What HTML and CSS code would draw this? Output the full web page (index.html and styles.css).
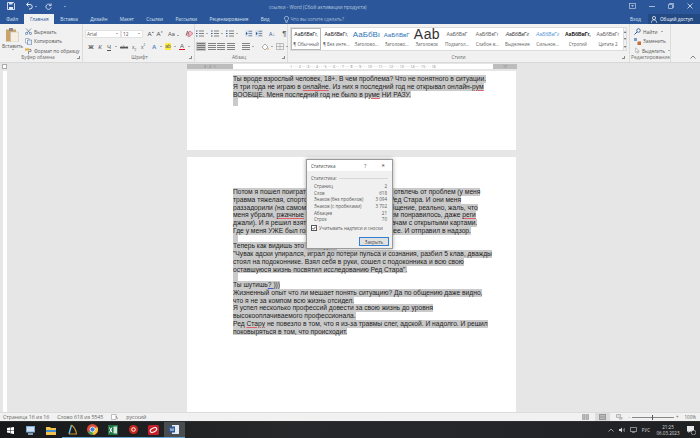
FILE: index.html
```html
<!DOCTYPE html>
<html lang="ru">
<head>
    <meta charset="UTF-8">
    <title>ссылки - Word</title>
    <link rel="stylesheet" href="styles.css">
</head>
<body>
    <svg class="defs" width="0" height="0">
        <symbol id="lines" viewBox="0 0 8 7"><path d="M0 .5h8M0 2.5h8M0 4.5h8M0 6.5h8" stroke="#666" stroke-width=".8"/></symbol>
        <symbol id="list" viewBox="0 0 8 7"><path d="M3 1h5M3 3.500h5M3 6h5" stroke="#666" stroke-width=".8"/><path d="M0 1h1.500M0 3.500h1.500M0 6h1.500" stroke="#2b579a" stroke-width="1.200"/></symbol>
        <symbol id="indent" viewBox="0 0 9 8"><rect width="9" height="8" fill="#dbe6f4"/><path d="M4 1.500h4M4 4h4M4 6.500h4" stroke="#666" stroke-width=".8"/><path d="M1 2l2 2-2 2z" fill="#2b579a"/></symbol>
    </svg>

    <header class="titlebar">
        <div class="qat">
            <svg class="q-save" width="8" height="8" viewBox="0 0 8 8"><path d="M.5.500h6l1 1v6h-7z" fill="none" stroke="#fff" stroke-width=".8"/><path d="M2 .500h3.500v2H2zM2 5h4v2.500H2z" fill="#dfe7f3"/></svg>
            <svg class="q-undo" width="8" height="8" viewBox="0 0 8 8"><path d="M2 2.500h3a2 2 0 0 1 0 4.500H4M3.500.500L1.500 2.500l2 2" fill="none" stroke="#dfe7f3" stroke-width="1"/></svg>
            <i class="caret-w"></i>
            <svg class="q-redo" width="7" height="7" viewBox="0 0 8 8"><path d="M6.500 2.500A3 3 0 1 0 7 5M7 .500v2.500H4.500" fill="none" stroke="#dfe7f3" stroke-width="1"/></svg>
            <i class="caret-w q-more"></i>
        </div>
        <div class="doc-title">ссылки - Word (Сбой активации продукта)</div>
        <div class="win-btns">
            <svg width="7" height="6" viewBox="0 0 7 6"><rect x=".5" y=".5" width="6" height="5" fill="none" stroke="#a9bcd8" stroke-width=".8"/><path d="M2 2h3L3.500 4z" fill="#a9bcd8"/></svg>
            <svg width="6" height="6" viewBox="0 0 6 6"><path d="M0 3.500h6" stroke="#c5d2e6" stroke-width=".8"/></svg>
            <svg width="6" height="6" viewBox="0 0 6 6"><path d="M.5 1.500h4v4h-4zM1.500 1.500v-1h4v4h-1" fill="none" stroke="#c5d2e6" stroke-width=".7"/></svg>
            <svg width="6" height="6" viewBox="0 0 6 6"><path d="M.5.500l5 5M5.500.500l-5 5" stroke="#dfe7f3" stroke-width=".8"/></svg>
        </div>
    </header>

    <nav class="tabs">
        <span class="tab tab-file">Файл</span>
        <span class="tab active">Главная</span>
        <span class="tab">Вставка</span>
        <span class="tab">Дизайн</span>
        <span class="tab">Макет</span>
        <span class="tab">Ссылки</span>
        <span class="tab">Рассылки</span>
        <span class="tab">Рецензирование</span>
        <span class="tab">Вид</span>
        <span class="tell">
            <svg width="5" height="7" viewBox="0 0 5 7"><path d="M2.500.400a2 2 0 0 1 1 3.800v1H1.500v-1a2 2 0 0 1 1-3.800zM1.500 6.300h2" fill="none" stroke="#dfe7f3" stroke-width=".6"/></svg>
            Что вы хотите сделать?
        </span>
        <span class="login">Вход</span>
        <span class="share">
            <svg width="7" height="7" viewBox="0 0 7 7"><circle cx="3" cy="2" r="1.600" fill="none" stroke="#fff" stroke-width=".7"/><path d="M.3 6.800c.3-2 1.200-3 2.700-3s2.400 1 2.700 3" fill="none" stroke="#fff" stroke-width=".7"/></svg>
            Общий доступ
        </span>
    </nav>

    <section class="ribbon">
        <div class="group g-clip">
            <div class="g-body clip-body">
                <div class="paste">
                    <svg width="13" height="14" viewBox="0 0 13 14"><rect x="0" y="1.500" width="10" height="12" fill="#c9a368"/><rect x="3" y="0" width="4" height="3" fill="#8a8a8a"/><rect x="4.500" y="4" width="8" height="10" fill="#f6efe0" stroke="#b9b9b9" stroke-width=".5"/></svg>
                    <span>Вставить</span>
                    <i class="caret"></i>
                </div>
                <ul class="clip-list">
                    <li><svg width="7" height="7" viewBox="0 0 7 7"><path d="M1 .5l4 4.500M6 .5L2 5" stroke="#5a6f8c" stroke-width=".7"/><circle cx="1.500" cy="5.500" r="1.100" fill="none" stroke="#2b579a" stroke-width=".6"/><circle cx="5.500" cy="5.500" r="1.100" fill="none" stroke="#2b579a" stroke-width=".6"/></svg>Вырезать</li>
                    <li><svg width="7" height="7" viewBox="0 0 7 7"><path d="M.5.500h3.500v4.500H.5z" fill="#fff" stroke="#7a8ca5" stroke-width=".6"/><path d="M2.500 2h4v4.800h-4z" fill="#e4ecf6" stroke="#5a77a0" stroke-width=".6"/></svg>Копировать</li>
                    <li><svg width="7" height="7" viewBox="0 0 7 7"><path d="M0 1.500h4.500v2H0z" fill="#e0a83c"/><path d="M4.500 2.500H6v2H3.500v2.500" fill="none" stroke="#666" stroke-width=".7"/></svg>Формат по образцу</li>
                </ul>
            </div>
            <div class="g-label clip-label">Буфер обмена <i class="launch"></i></div>
        </div>

        <div class="group g-font">
            <div class="g-body rows">
                <div class="row">
                    <span class="combo c-name">Arial<i class="caret"></i></span>
                    <span class="combo c-size">12<i class="caret"></i></span>
                    <span class="glyph gl-a">A<sup>▴</sup></span>
                    <span class="glyph gl-a">A<sup>▾</sup></span>
                    <span class="glyph gl-case">Aa<i class="caret"></i></span>
                    <svg class="eraser" width="9" height="8" viewBox="0 0 9 8"><path d="M1 4.500L5 1l3 2.500L4 7z" fill="#f4b6c4" stroke="#c7485f" stroke-width=".6"/><path d="M1 5.500L2.500 1 4 5.500" fill="none" stroke="#555" stroke-width=".6"/></svg>
                </div>
                <div class="row row-fmt">
                    <b class="glyph">Ж</b>
                    <em class="glyph">К</em>
                    <u class="glyph">Ч</u><i class="caret"></i>
                    <s class="glyph sm">abc</s>
                    <span class="glyph sm">x<sub>2</sub></span>
                    <span class="glyph sm gap-r">x<sup>2</sup></span>
                    <span class="glyph gl-fx">A</span><i class="caret"></i>
                    <span class="glyph hl sm">ab</span><i class="caret"></i>
                    <span class="glyph red">A</span><i class="caret"></i>
                </div>
            </div>
            <div class="g-label">Шрифт <i class="launch"></i></div>
        </div>

        <div class="group g-para">
            <div class="g-body rows">
                <div class="row row-para">
                    <svg class="ic"><use href="#list"/></svg><i class="caret"></i>
                    <svg class="ic"><use href="#list"/></svg><i class="caret"></i>
                    <svg class="ic"><use href="#list"/></svg><i class="caret"></i>
                    <svg class="ic ind"><use href="#indent"/></svg>
                    <svg class="ic"><use href="#indent"/></svg>
                    <span class="glyph sort">А↓</span>
                    <span class="glyph pil">¶</span>
                </div>
                <div class="row row-para">
                    <span class="align on"><svg class="ic"><use href="#lines"/></svg></span>
                    <svg class="ic"><use href="#lines"/></svg>
                    <svg class="ic"><use href="#lines"/></svg>
                    <svg class="ic"><use href="#lines"/></svg>
                    <svg class="ic spaced"><use href="#lines"/></svg><i class="caret"></i>
                    <svg class="ic shade" viewBox="0 0 8 7"><path d="M1 4l3-3 3 3-3 3z" fill="#fff" stroke="#777" stroke-width=".6"/><path d="M7 5v2" stroke="#e0a83c"/></svg><i class="caret"></i>
                    <svg class="ic" viewBox="0 0 8 7"><path d="M.5.500h7v6h-7zM4 .5v6M.5 3.500h7" fill="none" stroke="#999" stroke-width=".6"/></svg><i class="caret"></i>
                </div>
            </div>
            <div class="g-label para-label">Абзац <i class="launch"></i></div>
        </div>

        <div class="group g-styles">
            <div class="g-body">
                <div class="gallery">
                    <div class="style sel"><span class="pv">АаБбВвГг,</span><span class="nm">¶ Обычный</span></div>
                    <div class="style"><span class="pv">АаБбВвГг,</span><span class="nm">¶ Без инте...</span></div>
                    <div class="style"><span class="pv h1">АаБбВı</span><span class="nm">Заголово...</span></div>
                    <div class="style"><span class="pv h2">АаБбВвГ</span><span class="nm">Заголово...</span></div>
                    <div class="style"><span class="pv big">Ааb</span><span class="nm">Заголовок</span></div>
                    <div class="style"><span class="pv gr">АаБбВвГ</span><span class="nm">Подзагол...</span></div>
                    <div class="style"><span class="pv gr">АаБбВвГг</span><span class="nm">Слабое в...</span></div>
                    <div class="style"><span class="pv it">АаБбВвГг</span><span class="nm">Выделение</span></div>
                    <div class="style"><span class="pv bl">АаБбВвГг</span><span class="nm">Сильное...</span></div>
                    <div class="style"><span class="pv st">АаБбВвГг,</span><span class="nm">Строгий</span></div>
                    <div class="style"><span class="pv gr">АаБбВвГг</span><span class="nm">Цитата 2</span></div>
                    <div class="scroll"><i>▴</i><i>▾</i><i>▾</i></div>
                </div>
            </div>
            <div class="g-label">Стили <i class="launch"></i></div>
        </div>

        <div class="group g-edit">
            <ul class="g-body edit-list">
                <li><svg width="7" height="7" viewBox="0 0 7 7"><circle cx="4.500" cy="2.500" r="1.800" fill="none" stroke="#2b579a" stroke-width=".8"/><path d="M3 4L.5 6.500" stroke="#2b579a"/></svg>Найти <i class="caret"></i></li>
                <li><svg width="7" height="7" viewBox="0 0 7 7"><path d="M0 0h3v3H0z" fill="#7a9bc8"/><path d="M3.500 3.500H7V7H3.500z" fill="#c1703a"/></svg>Заменить</li>
                <li><svg width="7" height="7" viewBox="0 0 7 7"><path d="M2 .5v5.500l1.500-1.300 1 2 .8-.4-1-2h2z" fill="#fff" stroke="#777" stroke-width=".5"/></svg>Выделить <i class="caret"></i></li>
            </ul>
            <div class="g-label">Редактирование</div>
        </div>
        <svg class="collapse" width="6" height="4" viewBox="0 0 6 4"><path d="M.5 3.500L3 1l2.500 2.500" fill="none" stroke="#666" stroke-width=".8"/></svg>
    </section>

    <div class="ruler-row">
        <span class="tab-sel"></span>
        <div class="ruler">
            <span class="r-margin">3 · 2 · 1</span>
            <span class="r-main">1 · · · 2 · · · 3 · · · 4 · · · 5 · · · 6 · · · 7 · · · 8 · · · 9 · · · 10 · · · 11 · · · 12 · · · 13 · · · 14 · · · 15 · · · 16</span>
            <span class="r-margin r-end">17</span>
        </div>
    </div>

    <main class="workspace">
        <div class="v-ruler"></div>
        <div class="pages">
            <article class="page page-one">
                <p class="ln"><span>Ты вроде взрослый человек, 18+. В чем проблема? Что не понятного в ситуации. </span></p>
                <p class="ln"><span>Я три года не играю в <u class="err">онлайне</u>. Из них я последний год не открывал онлайн-<u class="err">рум</u></span></p>
                <p class="ln"><span>ВООБЩЕ. Меня последний год не было в <u class="err">руме</u> НИ РАЗУ. </span></p>
                <p class="ln"><span class="mark"></span></p>
            </article>
            <article class="page page-two">
                <p class="ln"><span>Потом я пошел поиграть в игру, чтобы там немного отвлечь от проблем (у меня</span></p>
                <p class="ln"><span>травма тяжелая, спортом нельзя, и я все играл) в Ред Стара. И они меня</span></p>
                <p class="ln"><span>раззадорили (на самом деле там было отличное общение, реально, жаль, что</span></p>
                <p class="ln"><span>меня убрали, <u class="err">ржачные</u> были все люди, там нам всем понравилось, даже <u class="err">реги</u></span></p>
                <p class="ln"><span>джали). И я решил взять и начать там играть по сдачам с открытыми картами.</span></p>
                <p class="ln"><span>Где у меня УЖЕ был горький опыт и всё стало точнее. И отправил в надзор.</span></p>
                <p class="ln"><span class="mark"></span></p>
                <p class="ln"><span>Теперь как видишь это выглядит:</span></p>
                <p class="ln"><span>"Чувак адски упирался, играл до потери пульса и сознания, разбил 5 клав, дважды</span></p>
                <p class="ln"><span>стоял на подоконнике. Взял себя в руки, сошел с подоконника и всю свою</span></p>
                <p class="ln"><span>оставшуюся жизнь посвятил исследованию Ред Стара".</span></p>
                <p class="ln"><span class="mark"></span></p>
                <p class="ln"><span>Ты шутишь<u class="gram">? </u>)))</span></p>
                <p class="ln"><span>Жизненный опыт что ли мешает понять ситуацию? Да по общению даже видно,</span></p>
                <p class="ln"><span>что я не за компом всю жизнь отсидел.</span></p>
                <p class="ln"><span>Я успел несколько профессий довести за свою жизнь до уровня</span></p>
                <p class="ln"><span>высокооплачиваемого профессионала.</span></p>
                <p class="ln"><span>Ред <u class="err">Стару</u> не повезло в том, что я из-за травмы слег, адской. И надолго. И решил</span></p>
                <p class="ln"><span>поковыряться в том, что происходит.</span></p>
            </article>
        </div>
    </main>

    <footer class="statusbar">
        <span>Страница 16 из 16</span>
        <span>Слово 618 из 5545</span>
        <svg width="7" height="6" viewBox="0 0 7 6"><path d="M.5.500h4.500v5H.5z" fill="#fff" stroke="#999" stroke-width=".6"/><path d="M5 2l1.500 3" stroke="#777" stroke-width=".8"/></svg>
        <span>русский</span>
        <div class="views">
            <svg width="7" height="6" viewBox="0 0 7 6"><path d="M.5.500h2.500v5H.5zM4 .5h2.500v5H4z" fill="#bbb" stroke="#888" stroke-width=".5"/></svg>
            <span class="view-on"><svg width="7" height="6" viewBox="0 0 7 6"><rect width="7" height="6" fill="#9a9a9a"/><path d="M1 1.500h5M1 3h5M1 4.500h5" stroke="#d9d9d9" stroke-width=".5"/></svg></span>
            <svg width="7" height="6" viewBox="0 0 7 6"><path d="M.5.500h4v3h-4z" fill="#ddd" stroke="#888" stroke-width=".5"/><path d="M3 3h3.500v2.500H3z" fill="#bbb"/></svg>
        </div>
        <div class="zoom">
            <span>-</span><i class="track"><b></b></i><span>+</span>
            <span class="pct">100%</span>
        </div>
    </footer>

    <footer class="taskbar">
        <span class="task"><svg width="7" height="7" viewBox="0 0 7 7"><path d="M0 1l3-.5V3H0zM3.500.4L7 0v3H3.500zM0 3.500h3V6L0 5.600zM3.500 3.500H7V7l-3.500-.5z" fill="#fff"/></svg></span>
        <span class="task"><svg width="11" height="11" viewBox="0 0 11 11"><rect x="1" y="1" width="9" height="6.500" fill="#7fa7d6"/><rect x="2" y="2" width="7" height="4.500" fill="#cfe0f2"/><rect x="3" y="8" width="5" height="2" fill="#8a97a6"/></svg></span>
        <span class="task"><svg width="10" height="9" viewBox="0 0 10 9"><path d="M0 1h4l1 1h5v7H0z" fill="#f2c14e"/><rect y="4" width="10" height="2" fill="#3f8fd2"/></svg></span>
        <span class="task run"><svg width="10" height="11" viewBox="0 0 10 11"><path d="M2 10L4.500 1" stroke="#69c3e8" stroke-width="1.400"/><path d="M4.500 1C7 3 9 6 9.500 10H2" fill="none" stroke="#c8922e" stroke-width="1.200"/></svg></span>
        <span class="task run"><svg width="11" height="11" viewBox="0 0 11 11"><circle cx="5.500" cy="5.500" r="5.500" fill="#dd4b39"/><path d="M5.500 5.500L1 8.200A5.500 5.500 0 0 0 6 11z" fill="#3aa757"/><path d="M5.500 5.500L6 11A5.500 5.500 0 0 0 10.400 3z" fill="#fbc02d"/><circle cx="5.500" cy="5.500" r="2.500" fill="#3f7fe0" stroke="#fff" stroke-width=".8"/></svg></span>
        <span class="task run"><svg width="10" height="10" viewBox="0 0 10 10"><rect width="10" height="10" fill="#1f7244"/><rect x="5.500" y="1.500" width="3.500" height="7" fill="#cfe6d8"/><path d="M1.500 2.500l2.500 5M4 2.500l-2.500 5" stroke="#fff"/></svg></span>
        <span class="task run"><svg width="9" height="9" viewBox="0 0 9 9"><circle cx="4.500" cy="4.500" r="4.500" fill="#c8281e"/><circle cx="4.500" cy="4.500" r="1.800" fill="none" stroke="#fff"/></svg></span>
        <span class="task run"><svg width="11" height="10" viewBox="0 0 11 10"><rect width="11" height="10" rx="1.500" fill="#c5202a"/><ellipse cx="5.500" cy="5" rx="3.500" ry="2" fill="none" stroke="#fff" transform="rotate(-25 5.500 5)"/></svg></span>
        <span class="task run current"><svg width="10" height="9" viewBox="0 0 10 9"><rect x="3" width="7" height="9" fill="#e4ecf6"/><rect y="1.500" width="6" height="6" fill="#2b579a"/><path d="M1.200 3l.8 3 1-2.500 1 2.500.8-3" fill="none" stroke="#fff" stroke-width=".5"/></svg></span>
        <div class="tray">
            <svg width="6" height="4" viewBox="0 0 6 4"><path d="M.5 3.500L3 1l2.500 2.500" fill="none" stroke="#d5d5d5" stroke-width=".7"/></svg>
            <svg width="6" height="6" viewBox="0 0 6 6"><path d="M0 2h1.500L3 .5v5L1.500 4H0z" fill="#d5d5d5"/><path d="M4 2c.5.700.5 1.300 0 2M5 1c1 1.200 1 2.800 0 4" fill="none" stroke="#d5d5d5" stroke-width=".5"/></svg>
            <svg width="7" height="6" viewBox="0 0 7 6"><path d="M.5.500h6v4h-6zM2 5.700h3" fill="none" stroke="#d5d5d5" stroke-width=".6"/></svg>
            <span class="lang">РУС</span>
            <span class="clock">21:25<br>06.03.2023</span>
            <svg class="notif" width="9" height="9" viewBox="0 0 9 9"><path d="M0 0h7v5.500H3L1.500 7V5.500H0z" fill="#e8e8e8"/><circle cx="6.500" cy="6.500" r="2.300" fill="#222" stroke="#e8e8e8" stroke-width=".5"/></svg>
        </div>
    </footer>

    <!-- окно статистики поверх документа -->
    <div class="dialog">
        <div class="dlg-title"><span>Статистика</span><span class="dlg-q">?</span><span class="dlg-x">✕</span></div>
        <div class="dlg-group">Статистика:</div>
        <dl class="stats">
            <div><dt>Страниц</dt><dd>2</dd></div>
            <div><dt>Слов</dt><dd>618</dd></div>
            <div><dt>Знаков (без пробелов)</dt><dd>3 094</dd></div>
            <div><dt>Знаков (с пробелами)</dt><dd>3 702</dd></div>
            <div><dt>Абзацев</dt><dd>21</dd></div>
            <div><dt>Строк</dt><dd>70</dd></div>
        </dl>
        <label class="dlg-check"><svg class="box" width="6" height="6" viewBox="0 0 6 6"><rect x=".5" y=".5" width="5" height="5" fill="#fff" stroke="#555"/><path d="M1.400 3l1.100 1.200L4.600 1.800" fill="none" stroke="#333" stroke-width=".8"/></svg>Учитывать надписи и сноски</label>
        <div class="dlg-foot"><button class="dlg-btn">Закрыть</button></div>
    </div>
</body>
</html>
```

FILE: styles.css
```css
* {
    box-sizing: border-box;
}

html, body {
    margin: 0;
    padding: 0;
    height: 438px;
    overflow: hidden;
}

body {
    position: relative;
    display: flex;
    flex-direction: column;
    width: 700px;
    font-family: "Open Sans", "Noto Sans", sans-serif;
    font-size: 4.800px;
    color: #555;
    background-color: #e6e6e6;
}

.defs {
    position: absolute;
}

i {
    font-style: normal;
}

ul, dl, dd {
    margin: 0;
    padding: 0;
    list-style: none;
}

.caret {
    display: inline-block;
    width: 0;
    height: 0;
    margin: 0 2px;
    border-left: 1.500px solid transparent;
    border-right: 1.500px solid transparent;
    border-top: 1.500px solid #666;
}

.caret-w {
    display: inline-block;
    width: 0;
    height: 0;
    border-left: 1.500px solid transparent;
    border-right: 1.500px solid transparent;
    border-top: 1.500px solid #dfe7f3;
}

/* заголовок окна */
.titlebar {
    display: flex;
    align-items: center;
    height: 14px;
    background-color: #2b579a;
    color: #b9c8df;
}

.qat {
    display: flex;
    align-items: center;
    width: 240px;
    padding-left: 7px;
    margin-top: -2px;
}

.q-undo {
    margin-left: 10px;
    margin-right: 2px;
}

.q-redo {
    margin-left: 8px;
}

.q-more {
    margin-left: 12px;
}

.doc-title {
    margin-left: 29px;
    white-space: nowrap;
}

.win-btns {
    display: flex;
    gap: 13px;
    margin-left: auto;
    margin-top: -2px;
    padding-right: 7px;
}

.tabs {
    display: flex;
    align-items: center;
    height: 10px;
    background-color: #2b579a;
    color: #d8e2f0;
    font-size: 4.700px;
}

.tab {
    display: flex;
    align-items: center;
    height: 100%;
    padding: 0 6.200px;
    white-space: nowrap;
}

.tab.active {
    background-color: #f1f1f1;
    color: #2b579a;
    padding: 0 5.500px;
}

.tell {
    display: flex;
    align-items: center;
    gap: 2px;
    margin-left: 8px;
    color: #a9bcd8;
}

.login {
    margin-left: auto;
    margin-right: 7px;
}

.share {
    display: flex;
    align-items: center;
    gap: 2px;
    height: 100%;
    padding: 0 7px 0 3px;
    background-color: #244a84;
    color: #fff;
}

/* лента */
.ribbon {
    position: relative;
    display: flex;
    height: 39px;
    background-color: #f1f1f1;
    border-bottom: 1px solid #d8d8d8;
}

.group {
    display: flex;
    flex-direction: column;
    border-right: 1px solid #dcdcdc;
}

.g-body {
    flex: 1;
    min-height: 0;
}

.g-label {
    position: relative;
    height: 8px;
    line-height: 7px;
    text-align: center;
    color: #6a6a6a;
}

.clip-label {
    padding-right: 6px;
}

.para-label {
    padding-right: 5px;
}

.launch {
    position: absolute;
    right: 2px;
    top: 2px;
    width: 3px;
    height: 3px;
    border-right: 1px solid #888;
    border-bottom: 1px solid #888;
}

.g-clip {
    width: 83px;
}

.clip-body {
    display: flex;
    padding-top: 3px;
}

.paste {
    display: flex;
    flex-direction: column;
    align-items: center;
    width: 25px;
    padding-top: 1px;
    line-height: 6px;
}

.paste svg {
    margin-bottom: 1px;
}

.clip-list li {
    display: flex;
    align-items: center;
    gap: 2px;
    height: 9.500px;
    white-space: nowrap;
}

.g-font {
    width: 112px;
    padding-left: 2px;
}

.rows {
    display: flex;
    flex-direction: column;
    gap: 4px;
    padding-top: 5px;
}

.row {
    display: flex;
    align-items: center;
    height: 9px;
}

.combo {
    position: relative;
    display: flex;
    align-items: center;
    justify-content: space-between;
    height: 8px;
    background-color: #fff;
    border: 1px solid #e2e2e2;
    padding-left: 1px;
}

.c-name {
    width: 36px;
}

.c-size {
    width: 22px;
    margin-right: 3px;
}

.glyph {
    display: inline-block;
    font-family: "Liberation Sans", sans-serif;
    font-size: 6px;
    line-height: 8px;
    color: #555;
    text-align: center;
    min-width: 6px;
}

.glyph sup, .glyph sub {
    font-size: 3px;
    line-height: 0;
}

.gl-a {
    width: 9px;
    color: #444;
}

.gl-case {
    margin-left: 4px;
    margin-right: 3px;
    font-size: 5.500px;
    white-space: nowrap;
}

.eraser {
    margin-left: 1px;
}

.row-fmt {
    padding-left: 3px;
}

.row-fmt .glyph {
    margin-right: 3px;
}

.row-fmt .caret {
    margin: 0 3px 0 0;
}

.sm {
    font-size: 5px;
}

.row-fmt .gap-r {
    margin-right: 5px;
}

.gl-fx {
    color: #5b86c4;
    font-weight: bold;
}

.hl {
    background-color: #ffec3d;
    height: 7px;
    line-height: 6px;
}

.red {
    border-bottom: 1.500px solid #e01020;
    line-height: 6px;
}

.g-para {
    width: 93px;
    padding-left: 1px;
}

.ic {
    width: 8px;
    height: 7px;
    flex: none;
}

.row-para {
    gap: 1.500px;
}

.row-para .caret {
    margin: 0 2px 0 0;
}

.row-para .ind {
    margin-left: 4px;
}

.sort {
    margin-left: 5px;
    font-size: 5px;
    color: #2b579a;
    white-space: nowrap;
}

.pil {
    margin-left: 5px;
    font-size: 8px;
}

.align {
    display: flex;
    align-items: center;
    height: 9px;
    padding: 0 1px;
}

.align.on {
    background-color: #c6c6c6;
}

.spaced {
    margin-left: 6px;
}

.shade {
    margin-left: 4px;
}

.g-styles {
    width: 342px;
    padding: 3px 2px 0;
}

.gallery {
    display: flex;
    height: 24px;
    background-color: #fff;
    border: 1px solid #dcdcdc;
}

.style {
    display: flex;
    flex-direction: column;
    align-items: center;
    justify-content: flex-end;
    width: 30.200px;
    flex: none;
    white-space: nowrap;
    padding-bottom: 2px;
    font-size: 4.500px;
}

.style.sel {
    outline: 1px solid #b8b8b8;
    outline-offset: -1px;
}

.pv {
    display: block;
    height: 13px;
    line-height: 13px;
    font-size: 5px;
    color: #222;
    font-family: "Liberation Sans", sans-serif;
}

.nm {
    color: #5e5e5e;
    line-height: 7px;
}

.h1 {
    font-size: 8px;
    color: #2e74b5;
}

.h2 {
    font-size: 6.200px;
    color: #2e74b5;
}

.big {
    font-size: 14px;
    letter-spacing: .3px;
    color: #333;
}

.gr {
    color: #666;
}

.it {
    color: #333;
    font-style: italic;
}

.bl {
    color: #5b9bd5;
    font-style: italic;
}

.st {
    color: #111;
    font-weight: bold;
}

.scroll {
    display: flex;
    flex-direction: column;
    width: 6px;
    margin-left: auto;
    background-color: #f1f1f1;
    border-left: 1px solid #dcdcdc;
    font-size: 4px;
    text-align: center;
}

.scroll i {
    flex: 1;
    line-height: 7px;
}

.g-edit {
    width: 41px;
    padding-left: 1px;
}

.edit-list {
    padding: 3px 0 0 3px;
}

.edit-list li {
    display: flex;
    align-items: center;
    gap: 2px;
    height: 9.500px;
    white-space: nowrap;
}

.edit-list .caret {
    margin: 0 0 0 1px;
}

.collapse {
    position: absolute;
    right: 4px;
    bottom: 3px;
}

/* линейка */
.ruler-row {
    display: flex;
    align-items: center;
    height: 8px;
    padding-bottom: 1px;
}

.tab-sel {
    width: 5px;
    height: 5px;
    margin-left: 2px;
    background-color: #fff;
    border: 1px solid #ababab;
}

.ruler {
    display: flex;
    height: 5px;
    width: 330px;
    margin-left: 180px;
    font-size: 3.600px;
    line-height: 5px;
    color: #777;
    white-space: nowrap;
    text-align: center;
}

.r-margin {
    width: 46px;
    background-color: #bdbdbd;
}

.r-main {
    flex: 1;
    background-color: #fff;
    overflow: hidden;
}

.r-end {
    width: 24px;
}

/* документ */
.workspace {
    position: relative;
    flex: 1;
    min-height: 0;
    overflow: hidden;
}

.v-ruler {
    position: absolute;
    left: 3px;
    top: 0;
    bottom: 0;
    width: 4px;
    background-color: #fff;
}

.pages {
    display: flex;
    flex-direction: column;
    gap: 7px;
    width: 329px;
    margin-left: 187px;
}

.page {
    background-color: #fff;
    padding-left: 46px;
    font-family: "Liberation Sans", sans-serif;
    font-size: 6.700px;
    color: #222;
}

.page-one {
    height: 79px;
    padding-top: 4px;
}

.page-two {
    height: 260px;
    padding-top: 31px;
}

.ln {
    margin: 0;
    height: 7.750px;
    line-height: 7.750px;
    white-space: nowrap;
}

.ln > span {
    display: inline-block;
    height: 7.750px;
    background-color: #cacaca;
    vertical-align: top;
}

.ln > .mark {
    width: 5px;
}

.err {
    text-decoration: underline solid #e2606a 1px;
}

.gram {
    text-decoration: underline solid #4a5ad8 1px;
}

/* строка состояния */
.statusbar {
    display: flex;
    align-items: center;
    gap: 8px;
    height: 9px;
    padding-left: 3px;
    background-color: #f1f1f1;
    color: #666;
    border-top: 1px solid #dcdcdc;
    font-size: 5.200px;
}

.views {
    display: flex;
    align-items: center;
    gap: 6px;
    margin-left: auto;
    margin-right: -2px;
}

.view-on {
    display: flex;
    align-items: center;
    height: 9px;
    padding: 0 4px;
    background-color: #dcdcdc;
}

.zoom {
    display: flex;
    align-items: center;
    gap: 2px;
    padding-right: 4px;
    font-size: 4.500px;
}

.track {
    position: relative;
    width: 42px;
    height: 1px;
    background-color: #888;
}

.track b {
    position: absolute;
    left: 20px;
    top: -2px;
    width: 1px;
    height: 5px;
    background-color: #555;
}

.pct {
    margin-left: 4px;
}

/* панель задач */
.taskbar {
    display: flex;
    align-items: center;
    height: 17px;
    background: linear-gradient(90deg, #16181a 0%, #26282a 40%, #24262a 70%, #1e2022 100%);
    color: #ddd;
    border-top: 1px solid #2f2f2f;
}

.task {
    display: flex;
    align-items: center;
    justify-content: center;
    width: 20.500px;
    height: 100%;
}

.task.run {
    border-bottom: 1px solid #6aa6d6;
}

.task.current {
    background-color: #4a4d50;
}

.tray {
    display: flex;
    align-items: center;
    gap: 5px;
    margin-left: auto;
    padding-right: 4px;
    font-size: 4.500px;
}

.clock {
    width: 24px;
    text-align: center;
    line-height: 6.500px;
    white-space: nowrap;
    margin-left: 1px;
}

.notif {
    margin-left: 2px;
}

/* диалог */
.dialog {
    position: absolute;
    left: 306px;
    top: 159px;
    width: 87px;
    height: 90px;
    padding: 0 4px;
    background-color: #f0f0f0;
    border: 1px solid #9a9a9a;
    box-shadow: 0 0 4px rgba(0, 0, 0, 0.35);
    font-size: 4.500px;
    color: #555;
}

.dlg-title {
    display: flex;
    align-items: center;
    height: 11px;
    margin: 0 -4px;
    padding: 0 7px 0 4px;
    background-color: #fff;
    color: #444;
}

.dlg-q {
    margin-left: auto;
    margin-right: 15px;
}

.dlg-x {
    font-family: "DejaVu Sans", sans-serif;
}

.dlg-group {
    display: flex;
    align-items: center;
    gap: 2px;
    margin-top: 3px;
    height: 8px;
}

.dlg-group::after {
    content: "";
    flex: 1;
    height: 1px;
    background-color: #d8d8d8;
}

.stats {
    padding: 1px 1px 0 3px;
}

.stats div {
    display: flex;
    justify-content: space-between;
    height: 6.700px;
    line-height: 6.700px;
}

.dlg-check {
    display: flex;
    align-items: center;
    gap: 2px;
    margin-top: 1px;
    height: 8px;
    white-space: nowrap;
}

.box {
    flex: none;
}

.dlg-foot {
    display: flex;
    justify-content: flex-end;
    margin-top: 5px;
}

.dlg-btn {
    width: 30px;
    height: 9px;
    padding: 0;
    margin-right: -1px;
    background-color: #e1e1e1;
    border: 1px solid #2f7fd2;
    font-family: inherit;
    font-size: 4.500px;
    line-height: 6px;
    color: #444;
}
```
